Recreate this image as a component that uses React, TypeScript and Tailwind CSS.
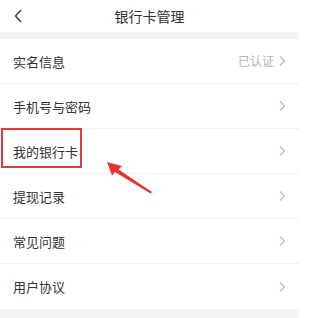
import React from "react";

const rows = [
  { label: "实名信息", value: "已认证" },
  { label: "手机号与密码" },
  { label: "我的银行卡", boxed: true },
  { label: "提现记录" },
  { label: "常见问题" },
  { label: "用户协议" },
];

function Chevron() {
  return (
    <svg width="8" height="12" viewBox="0 0 8 12" className="ml-[4px]">
      <path d="M2 1.5 L6.5 6 L2 10.5" fill="none" stroke="#bdbdbd" strokeWidth="1.3" />
    </svg>
  );
}

export default function App() {
  return (
    <div
      className="relative w-[299px] h-[318px] bg-[#f4f4f4] overflow-hidden"
      style={{ fontFamily: '"Noto Sans CJK SC", "Noto Sans", sans-serif' }}
    >
      <div className="h-[32px] bg-white flex items-center relative">
        <svg width="10" height="14" viewBox="0 0 10 14" className="absolute left-[13px] top-[9px]">
          <path d="M8 1 L2.5 7 L8 13" fill="none" stroke="#444" strokeWidth="1.6" />
        </svg>
        <div className="flex-1 text-center text-[14px] text-[#333] leading-none">银行卡管理</div>
      </div>
      <div className="mt-[7px] bg-white">
        {rows.map((r, i) => (
          <div
            key={i}
            className={`h-[45px] flex items-center px-[13px] ${i < rows.length - 1 ? "border-b border-[#f0f0f0]" : ""}`}
          >
            <span className="text-[13px] text-[#333] leading-none">{r.label}</span>
            <div className="flex-1" />
            {r.value && <span className="text-[12px] text-[#b5b5b5] leading-none">{r.value}</span>}
            <Chevron />
          </div>
        ))}
      </div>
      <div className="absolute left-[1px] top-[128px] w-[81px] h-[40px] border-2 border-[#e23a3a]" />
      <svg className="absolute left-[100px] top-[155px]" width="60" height="45" viewBox="0 0 60 45">
        <path d="M7 7 L22 11 L18.5 14.5 L52 37 L50.5 38.5 L15 17 L12 20.5 Z" fill="#e8332f" />
      </svg>
    </div>
  );
}
